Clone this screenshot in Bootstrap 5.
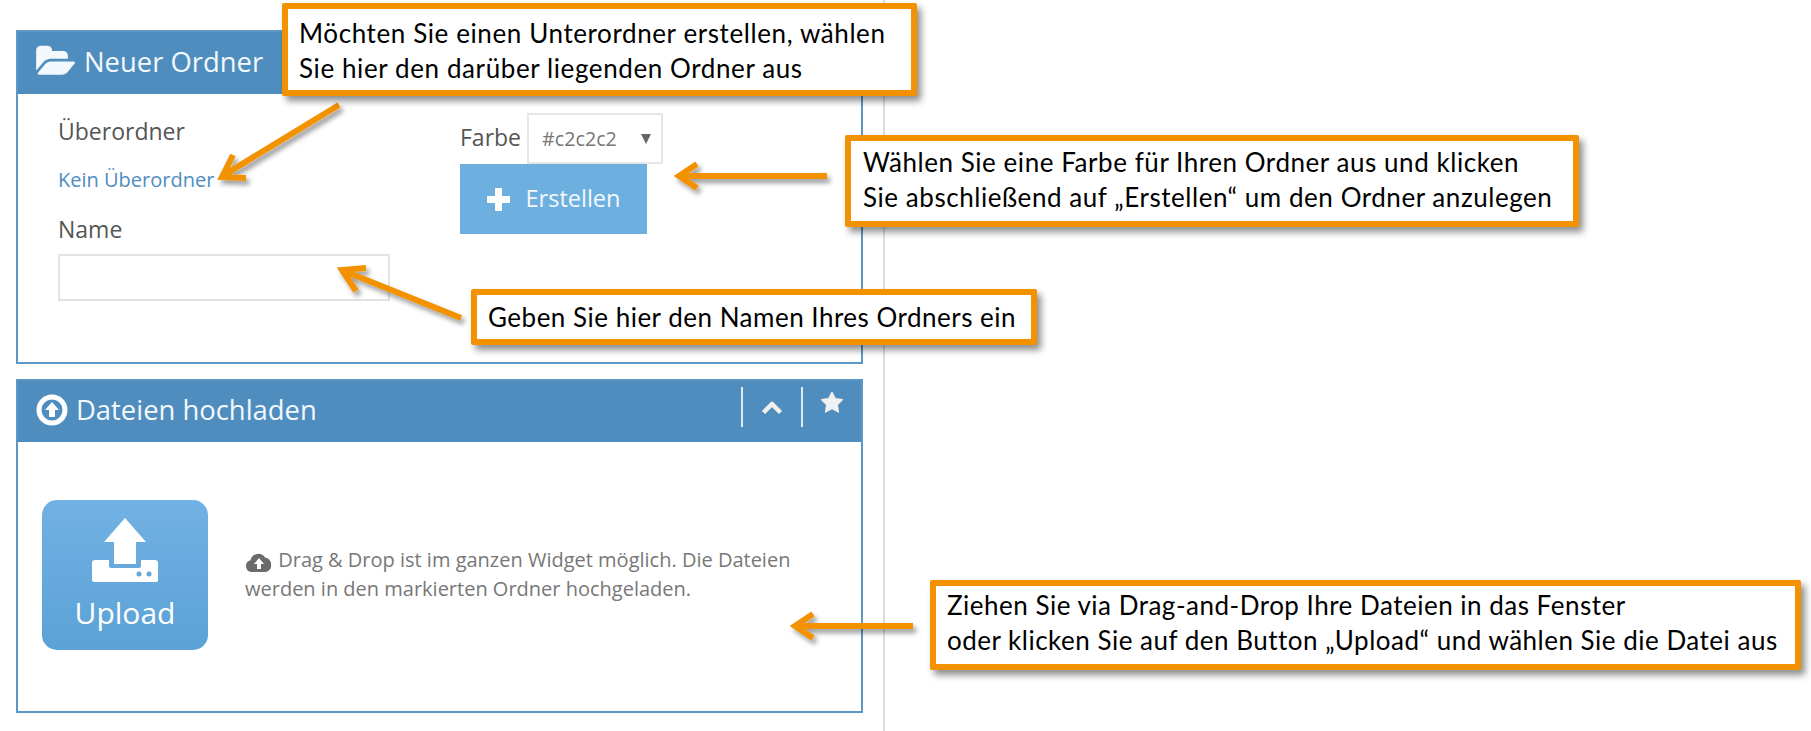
<!DOCTYPE html>
<html lang="de">
<head>
    <meta charset="UTF-8" />
    <title>Ordner und Upload</title>
    <link href="https://cdn.jsdelivr.net/npm/bootstrap@5.3.0/dist/css/bootstrap.min.css" rel="stylesheet">
    <style>
        body { width: 1811px; height: 731px; overflow: hidden; background: #fff; font-family: "Open Sans", sans-serif; color: #555; position: relative; }
        .side-col { width: 885px; height: 731px; padding: 30px 20px 0 16px; border-right: 2px solid #ddd; }
        .widget { border: 2px solid #5c97c6; border-radius: 0; background: #fff; }
        .widget-new { height: 334px; margin-bottom: 15px; }
        .widget-up { height: 334px; }
        .widget .card-header { height: 62px; padding: 0 0 3px 18px; background: #4f8dbf; color: #f3f8fc; border: 0; border-radius: 0; font-size: 27.4px; }
        .widget-up .card-header { height: 61px; }
        .head-title { margin-left: 8px; }
        .head-tools { margin-left: auto; height: 40px; align-self: flex-start; margin-top: 6px; }
        .head-tool { width: 60px; height: 40px; border-left: 2px solid #dfe9f2; }
        .new-body { padding: 0 0 0 40px; }
        .field-label { font-size: 23px; line-height: 28px; margin: 0; }
        .parent-link { font-size: 20px; color: #4f8dbf; text-decoration: none; line-height: 24px; display: block; margin-top: 23px; }
        .name-label { margin-top: 23px; }
        .left-fields { width: 332px; padding-top: 23px; }
        .name-input { height: 47px; border: 2px solid #e3e3e3; border-radius: 0; margin-top: 11px; }
        .right-fields { margin-left: 70px; padding-top: 19px; }
        .color-label { margin-top: -4px; }
        .color-pick { width: 136px; height: 51px; border: 2px solid #e6e6e6; border-radius: 0; font-size: 19.7px; color: #777; padding: 0 0 0 13px; margin-left: 6px; line-height: 47px; }
        .pick-caret { right: 10px; top: 19px; width: 0; height: 0; border-left: 5px solid transparent; border-right: 5px solid transparent; border-top: 10px solid #666; }
        .create-btn { width: 187px; height: 70px; background: #6db0e0; border: 0; border-radius: 0; color: #f3f8fc; font-size: 23.5px; padding: 0; }
        .upload-btn { width: 166px; height: 150px; border-radius: 15px; border: 0; padding: 0; color: #fff; font-size: 30px; background: linear-gradient(#72b1e3, #5ba2d6); line-height: 1; }
        .upload-body { padding: 58px 0 0 24px !important; }
        .upload-btn svg { margin-top: 18px; }
        .upload-btn span { margin-top: 16px; }
        .upload-hint { margin-left: 37px; margin-top: 45px; font-size: 20px; line-height: 29px; color: #777; width: 590px; }
        .callout { position: absolute; background: #fff; border: 6px solid #f39200; border-radius: 2px; box-shadow: 4px 5px 7px rgba(0, 0, 0, .45); font-family: Lato, sans-serif; color: #000; font-size: 26px; letter-spacing: .5px; line-height: 35px; white-space: nowrap; }
        .callout-a { left: 282px; top: 3px; width: 635px; height: 93px; padding: 7px 0 0 11px; letter-spacing: .6px; }
        .callout-b { left: 845px; top: 135px; width: 734px; height: 92px; padding: 4px 0 0 12px; letter-spacing: .55px; }
        .callout-c { left: 471px; top: 289px; width: 566px; height: 56px; padding: 5px 0 0 11px; }
        .callout-d { left: 930px; top: 580px; width: 871px; height: 90px; padding: 2px 0 0 11px; }
        .arrows { position: absolute; left: 0; top: 0; pointer-events: none; }
    </style>
</head>
<body>

<div class="side-col">

    <!-- Neuer Ordner -->
    <div class="card widget widget-new">
        <div class="card-header d-flex align-items-center">
            <svg width="40" height="37" viewBox="0 0 1920 1792" fill="#f3f8fc"><path d="M1879 952q0 31-31 66l-336 396q-43 51-120.500 86.500t-143.500 35.500h-1088q-34 0-60.500-13t-26.500-43q0-31 31-66l336-396q43-51 120.500-86.500t143.500-35.500h1088q34 0 60.500 13t26.500 43zm-343-344v160h-832q-94 0-197 47.500t-164 119.500l-337 396-5 6q0-4-.500-12.500t-.500-12.500v-960q0-92 66-158t158-66h320q92 0 158 66t66 158v32h544q92 0 158 66t66 158z"/></svg>
            <span class="head-title">Neuer Ordner</span>
        </div>
        <div class="card-body d-flex new-body">
            <div class="left-fields">
                <p class="field-label">Überordner</p>
                <a class="parent-link" href="#">Kein Überordner</a>
                <p class="field-label name-label">Name</p>
                <input class="form-control name-input" type="text">
            </div>
            <div class="right-fields">
                <div class="d-flex align-items-center">
                    <span class="field-label color-label">Farbe</span>
                    <div class="color-pick position-relative">#c2c2c2<span class="pick-caret position-absolute"></span></div>
                </div>
                <button class="btn create-btn d-flex align-items-center justify-content-center gap-3" type="button">
                    <svg width="23" height="23" viewBox="0 0 23 23" fill="#fff"><rect x="8" y="0" width="7" height="23" rx="1"/><rect x="0" y="8" width="23" height="7" rx="1"/></svg>
                    Erstellen
                </button>
            </div>
        </div>
    </div>

    <!-- Dateien hochladen -->
    <div class="card widget widget-up">
        <div class="card-header d-flex align-items-center">
            <svg width="32" height="32" viewBox="0 0 32 32"><circle cx="16" cy="16" r="13" fill="none" stroke="#fff" stroke-width="5"/><path d="M16 8l7 8h-4v7h-6v-7H9z" fill="#fff"/></svg>
            <span class="head-title">Dateien hochladen</span>
            <div class="head-tools d-flex">
                <div class="head-tool d-flex align-items-center justify-content-center">
                    <svg width="22" height="15" viewBox="0 0 22 15"><path d="M2.500 12.500L11 4l8.500 8.500" fill="none" stroke="#f3f0ec" stroke-width="4.500" stroke-linejoin="round"/></svg>
                </div>
                <div class="head-tool d-flex align-items-start justify-content-center pt-1">
                    <svg width="24" height="24" viewBox="0 0 1792 1792" fill="#eef0f2"><path d="M1728 647q0 22-26 48l-363 354 86 500q1 7 1 20 0 21-10.500 35.500t-30.500 14.500q-19 0-40-12l-449-236-449 236q-22 12-40 12-21 0-31.500-14.500t-10.500-35.500q0-6 2-20l86-500-364-354q-25-27-25-48 0-37 56-46l502-73 225-455q19-41 49-41t49 41l225 455 502 73q56 9 56 46z"/></svg>
                </div>
            </div>
        </div>
        <div class="card-body upload-body d-flex align-items-start">
            <button class="btn upload-btn d-flex flex-column align-items-center" type="button">
                <svg width="68" height="64" viewBox="0 0 68 64" fill="#fff">
                    <path d="M34 0L55 24H45V46H23V24H13z"/>
                    <path d="M4 42h14v6q0 2 2 2h28q2 0 2-2v-6h14q3 0 3 3v17q0 2-3 2H4q-3 0-3-2V45q0-3 3-3z"/>
                    <circle cx="48" cy="56" r="2.500" fill="#62a6da"/><circle cx="58" cy="56" r="2.500" fill="#62a6da"/>
                </svg>
                <span>Upload</span>
            </button>
            <div class="upload-hint">
                <svg width="28" height="22" viewBox="0 0 28 22" class="align-text-bottom"><path d="M7 21a6 6 0 0 1-1.500-11.800A8 8 0 0 1 20 6.500a7.500 7.500 0 0 1 1 14.500z" fill="#6b6b6b"/><path d="M14 7l5 6h-3v5h-4v-5H9z" fill="#fff"/></svg>
                Drag &amp; Drop ist im ganzen Widget möglich. Die Dateien werden in den markierten Ordner hochgeladen.
            </div>
        </div>
    </div>
</div>

<!-- Pfeile -->
<svg class="arrows" width="1811" height="731" viewBox="0 0 1811 731">
    <defs>
        <filter id="arrow-shadow" x="-20%" y="-20%" width="150%" height="150%"><feDropShadow dx="3" dy="4" stdDeviation="2.500" flood-color="#000" flood-opacity=".4"/></filter>
    </defs>
    <g fill="none" stroke="#f39200" stroke-width="6" filter="url(#arrow-shadow)">
        <path d="M339 105L224 175M233 155L222 177L246 178"/>
        <path d="M827 176H680M697 164L679 176L697 188"/>
        <path d="M461 318L344 271M366 268L342 270L356 291"/>
        <path d="M913 626H796M813 614L795 626L813 638"/>
    </g>
</svg>

<!-- Hinweise -->
<div class="callout callout-a">Möchten Sie einen Unterordner erstellen, wählen<br>Sie hier den darüber liegenden Ordner aus</div>
<div class="callout callout-b">Wählen Sie eine Farbe für Ihren Ordner aus und klicken<br>Sie abschließend auf „Erstellen“ um den Ordner anzulegen</div>
<div class="callout callout-c">Geben Sie hier den Namen Ihres Ordners ein</div>
<div class="callout callout-d">Ziehen Sie via Drag-and-Drop Ihre Dateien in das Fenster<br>oder klicken Sie auf den Button „Upload“ und wählen Sie die Datei aus</div>

<script src="https://cdn.jsdelivr.net/npm/bootstrap@5.3.0/dist/js/bootstrap.bundle.min.js"></script>
</body>
</html>
